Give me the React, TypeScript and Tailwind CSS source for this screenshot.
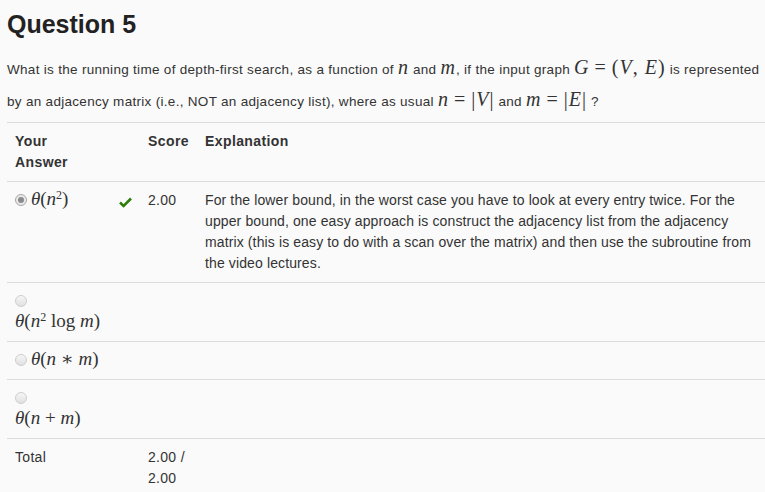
import React from 'react';

const serif = { fontFamily: '"Liberation Serif", "DejaVu Serif", serif' };

function V({ children }: { children: React.ReactNode }) {
  return <i className="italic">{children}</i>;
}

function M({ children }: { children: React.ReactNode }) {
  return (
    <span className="text-[20px] leading-none tracking-[1px] whitespace-nowrap" style={serif}>
      {children}
    </span>
  );
}

function Radio({ checked }: { checked?: boolean }) {
  return (
    <span
      className={`inline-block align-[-1px] w-[12px] h-[12px] rounded-full border relative ${
        checked ? 'border-[#a9a9a9] bg-[#e9e9e9]' : 'border-[#cfcfcf] bg-gradient-to-b from-[#f6f6f6] to-[#e0e0e0]'
      }`}
    >
      {checked && <span className="absolute left-[2px] top-[2px] w-[6px] h-[6px] rounded-full bg-[#8a8a8a]" />}
    </span>
  );
}

function Check() {
  return (
    <svg width="13" height="11" viewBox="0 0 13 11" className="inline-block">
      <path d="M1 5.5 L4.6 9 L12 1.5" fill="none" stroke="#2f7d0a" strokeWidth="2.6" strokeLinejoin="miter" />
    </svg>
  );
}

const Eq = () => <span className="mx-[5px] not-italic">=</span>;

function Theta({ children }: { children: React.ReactNode }) {
  return (
    <span className="text-[19px] leading-[16px] whitespace-nowrap tracking-normal" style={serif}>
      <i>θ</i>({children})
    </span>
  );
}

export default function App() {
  return (
    <div className="min-h-[492px] bg-[#fafafa] pl-[7px] text-[#333] font-[Liberation_Sans,Arial,sans-serif] text-[13px]">
      <h2 className="pt-[9px] text-[25px] leading-[30px] font-bold text-[#222]">Question 5</h2>

      <p className="mt-[15px] text-[13.5px] leading-[32px] tracking-[0.3px]">
        What is the running time of depth-first search, as a function of <M><V>n</V></M> and{' '}
        <M><V>m</V></M>, if the input graph{' '}
        <M><V>G</V><Eq />(<V>V</V>, <V>E</V>)</M> is represented
        <br />
        by an adjacency matrix (i.e., NOT an adjacency list), where as usual{' '}
        <M><V>n</V><Eq />|<V>V</V>|</M> and <M><V>m</V><Eq />|<V>E</V>|</M> ?
      </p>

      <table className="mt-[4px] w-full table-fixed border-collapse text-[14px] leading-[21px]">
        <colgroup>
          <col className="w-[133px]" />
          <col className="w-[57px]" />
          <col />
        </colgroup>
        <thead>
          <tr className="border-t border-b border-[#ddd] text-left align-top tracking-[0.4px]">
            <th className="p-[8px] font-bold">Your<br />Answer</th>
            <th className="p-[8px] font-bold">Score</th>
            <th className="p-[8px] font-bold">Explanation</th>
          </tr>
        </thead>
        <tbody className="align-top">
          <tr className="border-b border-[#ddd]">
            <td className="p-[8px]">
              <span className="float-right pt-[1px]"><Check /></span>
              <Radio checked /> <Theta><i>n</i><sup className="text-[12px] not-italic">2</sup></Theta>
            </td>
            <td className="p-[8px] tracking-[0.3px]">2.00</td>
            <td className="p-[8px] tracking-[0.12px]">
              For the lower bound, in the worst case you have to look at every entry twice. For the upper bound, one easy approach is construct the adjacency list from the adjacency matrix (this is easy to do with a scan over the matrix) and then use the subroutine from the video lectures.
            </td>
          </tr>
          <tr className="border-b border-[#ddd]">
            <td className="p-[8px]">
              <div><Radio /></div>
              <div><Theta><i>n</i><sup className="text-[12px]">2</sup> log <i>m</i></Theta></div>
            </td>
            <td className="p-[8px]"></td>
            <td className="p-[8px]"></td>
          </tr>
          <tr className="border-b border-[#ddd]">
            <td className="p-[8px]">
              <Radio /> <Theta><i>n</i> ∗ <i>m</i></Theta>
            </td>
            <td className="p-[8px]"></td>
            <td className="p-[8px]"></td>
          </tr>
          <tr className="border-b border-[#ddd]">
            <td className="p-[8px]">
              <div><Radio /></div>
              <div><Theta><i>n</i> + <i>m</i></Theta></div>
            </td>
            <td className="p-[8px]"></td>
            <td className="p-[8px]"></td>
          </tr>
          <tr className="tracking-[0.3px]">
            <td className="p-[8px]">Total</td>
            <td className="p-[8px]">2.00 /<br />2.00</td>
            <td className="p-[8px]"></td>
          </tr>
        </tbody>
      </table>
    </div>
  );
}
